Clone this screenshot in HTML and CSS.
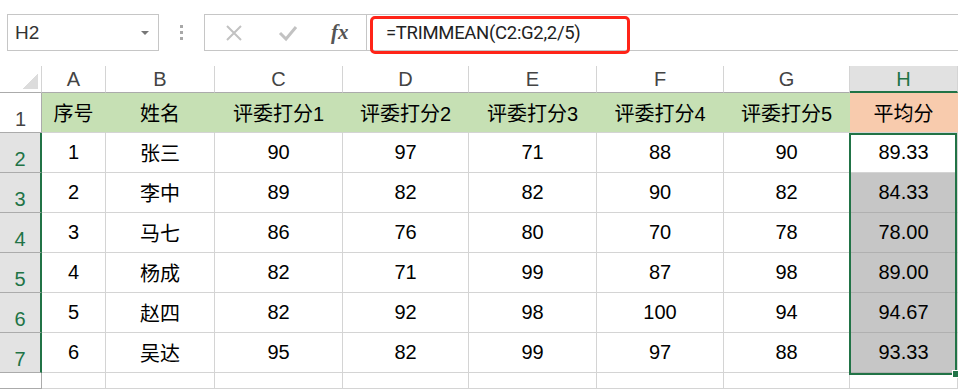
FILE: index.html
```html
<!DOCTYPE html>
<html lang="zh">
<head>
  <meta charset="UTF-8">
  <title>TRIMMEAN</title>
  <link rel="stylesheet" href="styles.css">
</head>
<body>
  <div class="toolbar">
    <div class="namebox">
      <span>H2</span>
      <svg class="caret" width="8" height="5" viewBox="0 0 8 5"><path d="M0 0h8L4 4z" fill="#777"/></svg>
    </div>
    <div class="dots"><i></i><i></i><i></i></div>
    <div class="fxbox">
      <svg width="18" height="18" viewBox="0 0 18 18"><path d="M2 2l14 14M16 2L2 16" stroke="#c2c2c2" stroke-width="2" fill="none"/></svg>
      <svg width="20" height="18" viewBox="0 0 20 18"><path d="M2 9l6 6L18 3" stroke="#c2c2c2" stroke-width="3" fill="none"/></svg>
      <span class="fx">fx</span>
    </div>
    <div class="formula">
      <span class="formula-text">=TRIMMEAN(C2:G2,2/5)</span>
      <div class="mark"></div>
    </div>
  </div>

  <div class="sheet">
    <div class="corner"></div>
    <div class="colhead">A</div>
    <div class="colhead">B</div>
    <div class="colhead">C</div>
    <div class="colhead">D</div>
    <div class="colhead">E</div>
    <div class="colhead">F</div>
    <div class="colhead">G</div>
    <div class="colhead active">H</div>

    <div class="rowhead">1</div>
    <div class="cell title">序号</div>
    <div class="cell title">姓名</div>
    <div class="cell title">评委打分1</div>
    <div class="cell title">评委打分2</div>
    <div class="cell title">评委打分3</div>
    <div class="cell title">评委打分4</div>
    <div class="cell title">评委打分5</div>
    <div class="cell title avg">平均分</div>

    <div class="rowhead active">2</div>
    <div class="cell">1</div><div class="cell">张三</div><div class="cell">90</div><div class="cell">97</div><div class="cell">71</div><div class="cell">88</div><div class="cell">90</div><div class="cell first">89.33</div>

    <div class="rowhead active">3</div>
    <div class="cell">2</div><div class="cell">李中</div><div class="cell">89</div><div class="cell">82</div><div class="cell">82</div><div class="cell">90</div><div class="cell">82</div><div class="cell picked">84.33</div>

    <div class="rowhead active">4</div>
    <div class="cell">3</div><div class="cell">马七</div><div class="cell">86</div><div class="cell">76</div><div class="cell">80</div><div class="cell">70</div><div class="cell">78</div><div class="cell picked">78.00</div>

    <div class="rowhead active">5</div>
    <div class="cell">4</div><div class="cell">杨成</div><div class="cell">82</div><div class="cell">71</div><div class="cell">99</div><div class="cell">87</div><div class="cell">98</div><div class="cell picked">89.00</div>

    <div class="rowhead active">6</div>
    <div class="cell">5</div><div class="cell">赵四</div><div class="cell">82</div><div class="cell">92</div><div class="cell">98</div><div class="cell">100</div><div class="cell">94</div><div class="cell picked">94.67</div>

    <div class="rowhead active">7</div>
    <div class="cell">6</div><div class="cell">吴达</div><div class="cell">95</div><div class="cell">82</div><div class="cell">99</div><div class="cell">97</div><div class="cell">88</div><div class="cell picked">93.33</div>

    <div class="rowhead"></div>
    <div class="cell"></div><div class="cell"></div><div class="cell"></div><div class="cell"></div><div class="cell"></div><div class="cell"></div><div class="cell"></div><div class="cell"></div>

    <div class="selection"><div class="handle"></div></div>
  </div>
</body>
</html>
```

FILE: styles.css
```css
body {
  margin: 0;
  width: 958px;
  height: 389px;
  overflow: hidden;
  background: #fff;
  font-family: "Liberation Sans", "Noto Sans CJK SC", sans-serif;
  color: #000;
}

/* formula bar */
.toolbar {
  height: 66px;
  box-sizing: border-box;
  padding: 14px 0 0 7px;
  display: flex;
  align-items: flex-start;
}
.namebox {
  width: 152px;
  height: 37px;
  box-sizing: border-box;
  border: 1px solid #c6c6c6;
  display: flex;
  align-items: center;
  justify-content: space-between;
  padding: 0 9px 0 7px;
  font-size: 19px;
  color: #333;
}
.caret {
  margin-top: 1px;
}
.dots {
  width: 45px;
  height: 37px;
  display: flex;
  flex-direction: column;
  align-items: center;
  justify-content: center;
  gap: 3px;
}
.dots i {
  width: 3px;
  height: 3px;
  background: #a8a8a8;
}
.fxbox {
  width: 163px;
  height: 37px;
  box-sizing: border-box;
  border: 1px solid #c6c6c6;
  display: flex;
  align-items: center;
  padding: 0 12px 0 20px;
  gap: 35px;
}
.fx {
  font-family: "Liberation Serif", serif;
  font-style: italic;
  font-weight: bold;
  font-size: 21px;
  color: #555;
  margin-left: -2px;
}
.formula {
  flex: 1;
  height: 37px;
  box-sizing: border-box;
  border-top: 1px solid #c6c6c6;
  border-bottom: 1px solid #c6c6c6;
  position: relative;
  display: flex;
  align-items: center;
  padding-left: 19px;
}
.formula-text {
  font-family: Roboto, "Liberation Sans", sans-serif;
  font-size: 18.5px;
  letter-spacing: -0.3px;
  color: #222;
  margin-top: 1px;
}
.mark {
  position: absolute;
  left: 3px;
  top: 1px;
  width: 260px;
  height: 38px;
  box-sizing: border-box;
  border: 3px solid #ff2418;
  border-radius: 5px;
}

/* grid */
.sheet {
  position: relative;
  display: grid;
  grid-template-columns: 42px 64px 109px 128px 126px 128px 127px 126px 108px;
  grid-template-rows: 27px repeat(7, 40px) 16px;
}
.corner {
  border-right: 1px solid #d4d4d4;
  border-bottom: 1px solid #ababab;
  background: linear-gradient(135deg, transparent 62%, #dcdcdc 62%) no-repeat right 3px bottom 3px / 20px 20px;
}
.colhead {
  display: flex;
  align-items: center;
  justify-content: center;
  font-size: 20px;
  color: #444;
  border-right: 1px solid #d4d4d4;
  border-bottom: 1px solid #ababab;
  padding-top: 1px;
}
.colhead.active {
  background: #e1e1e1;
  color: #217346;
  border-bottom: 2px solid #217346;
}
.rowhead {
  display: flex;
  align-items: flex-end;
  justify-content: center;
  padding-bottom: 1px;
  font-size: 20px;
  color: #444;
  border-right: 1px solid #ababab;
  border-bottom: 1px solid #ababab;
}
.rowhead.active {
  background: #e3e3e3;
  color: #217346;
  border-right: 2px solid #217346;
}
.cell {
  display: flex;
  align-items: center;
  justify-content: center;
  font-size: 20px;
  border-right: 1px solid #d4d4d4;
  border-bottom: 1px solid #d4d4d4;
}
.cell.title {
  background: #c6e0b4;
  border-color: #c6e0b4;
  border-bottom-color: #d4d4d4;
}
.cell.title.avg {
  background: #f8cbad;
  border-color: #f8cbad;
  border-bottom-color: #d4d4d4;
}
.cell.picked {
  background: #c6c6c6;
  border-bottom-color: #b0b0b0;
}
.selection {
  position: absolute;
  left: 849px;
  top: 66px;
  width: 108px;
  height: 242px;
  box-sizing: border-box;
  border: 2px solid #217346;
  margin-top: 1px;
}
.handle {
  position: absolute;
  right: -5px;
  bottom: -5px;
  width: 6px;
  height: 6px;
  background: #217346;
  border: 1px solid #fff;
}
```
